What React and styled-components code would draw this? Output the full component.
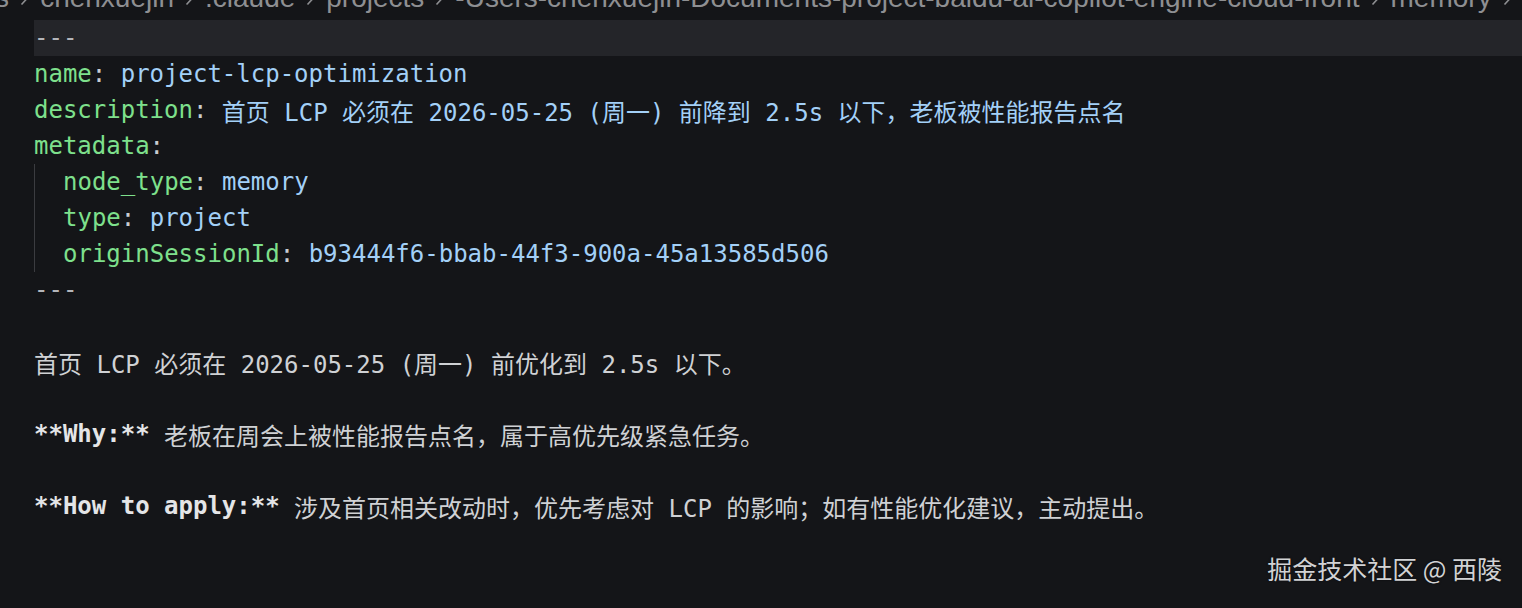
import React from "react";
import styled, { createGlobalStyle } from "styled-components";

const Global = createGlobalStyle`
  html, body {
    margin: 0;
    padding: 0;
    background: #141518;
  }
  #root {
    height: 100vh;
  }
`;

const Page = styled.div`
  position: relative;
  height: 608px;
  width: 1522px;
  overflow: hidden;
  background: #141518;
  display: flex;
  flex-direction: column;
`;

const Crumbs = styled.div`
  height: 20px;
  overflow: hidden;
  flex-shrink: 0;
`;

const CrumbRow = styled.div`
  display: flex;
  align-items: center;
  gap: 11px;
  margin-top: -16px;
  margin-left: -64px;
  height: 28px;
  font-family: "Liberation Sans", Arial, sans-serif;
  font-size: 28px;
  line-height: 28px;
  color: #8e8f92;
  white-space: nowrap;
`;

const Chevron = () => (
  <svg width="9" height="16" viewBox="0 0 9 16" fill="none">
    <path d="M1.5 1.5 L7.5 8 L1.5 14.5" stroke="#8e8f92" strokeWidth="1.6" />
  </svg>
);

const Editor = styled.div`
  display: flex;
  flex-direction: column;
  font-family: "DejaVu Sans Mono", "Noto Sans CJK SC", monospace;
  font-size: 24px;
  color: #cfd1d4;
`;

const Line = styled.div`
  display: flex;
  align-items: center;
  height: 36px;
  white-space: pre;
  background: ${(p) => (p.$active ? "#242529" : "transparent")};
  margin-left: ${(p) => (p.$active ? "34px" : "0")};
  padding-left: ${(p) => (p.$active ? "0" : "34px")};
`;

const Indent = styled.div`
  margin-left: 34px;
  border-left: 1.5px solid #3b3c40;
  padding-left: 28px;
  display: flex;
  flex-direction: column;
`;

const IndentLine = styled(Line)`
  padding-left: 0;
`;

const Key = styled.span`
  color: #7ee08c;
`;

const Punct = styled.span`
  color: #c9ccd0;
`;

const Value = styled.span`
  color: #a3d0f7;
`;

const Rule = styled.span`
  color: #b4b6ba;
`;

const Bold = styled.span`
  font-weight: bold;
  color: #e4e5e7;
`;

const Watermark = styled.div`
  position: absolute;
  right: 20px;
  bottom: 22px;
  font-family: "Noto Sans CJK SC", "Liberation Sans", sans-serif;
  font-size: 25px;
  color: #d2d3d5;
  text-shadow: 0 0 2px rgba(0, 0, 0, 0.6);
`;

const crumbs = [
  "Users",
  "chenxuejin",
  ".claude",
  "projects",
  "-Users-chenxuejin-Documents-project-baidu-ai-copilot-engine-cloud-front",
  "memory",
];

const Pair = ({ k, v }) => (
  <>
    <Key>{k}</Key>
    <Punct>: </Punct>
    <Value>{v}</Value>
  </>
);

export default function App() {
  return (
    <Page>
      <Global />
      <Crumbs>
        <CrumbRow>
          {crumbs.map((c) => (
            <React.Fragment key={c}>
              <span>{c}</span>
              <Chevron />
            </React.Fragment>
          ))}
        </CrumbRow>
      </Crumbs>
      <Editor>
        <Line $active>
          <Rule>---</Rule>
        </Line>
        <Line>
          <Pair k="name" v="project-lcp-optimization" />
        </Line>
        <Line>
          <Pair
            k="description"
            v="首页 LCP 必须在 2026-05-25 (周一) 前降到 2.5s 以下，老板被性能报告点名"
          />
        </Line>
        <Line>
          <Key>metadata</Key>
          <Punct>:</Punct>
        </Line>
        <Indent>
          <IndentLine>
            <Pair k="node_type" v="memory" />
          </IndentLine>
          <IndentLine>
            <Pair k="type" v="project" />
          </IndentLine>
          <IndentLine>
            <Pair k="originSessionId" v="b93444f6-bbab-44f3-900a-45a13585d506" />
          </IndentLine>
        </Indent>
        <Line>
          <Rule>---</Rule>
        </Line>
        <Line />
        <Line>首页 LCP 必须在 2026-05-25 (周一) 前优化到 2.5s 以下。</Line>
        <Line />
        <Line>
          <Bold>**Why:**</Bold> 老板在周会上被性能报告点名，属于高优先级紧急任务。
        </Line>
        <Line />
        <Line>
          <Bold>**How to apply:**</Bold> 涉及首页相关改动时，优先考虑对 LCP 的影响；如有性能优化建议，主动提出。
        </Line>
      </Editor>
      <Watermark>掘金技术社区 @ 西陵</Watermark>
    </Page>
  );
}
